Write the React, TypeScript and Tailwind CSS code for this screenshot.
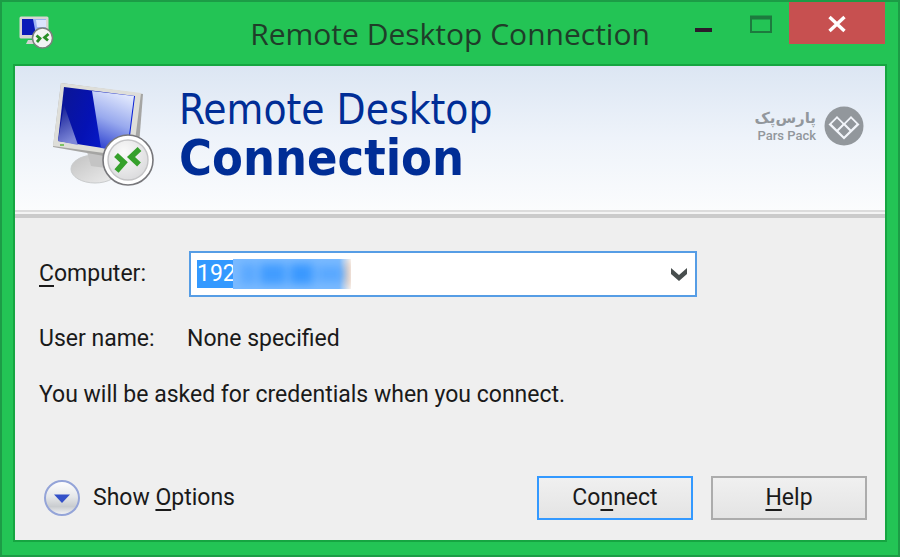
import React, { useState } from 'react';

function SessionBadge() {
  return (
    <>
      <circle cx="77" cy="78" r="25" fill="#fff" stroke="#77777b" strokeWidth="1.6" />
      <circle cx="77" cy="78" r="20" fill="url(#badgeFill)" stroke="#c4c4c6" strokeWidth="1.4" />
      <path d="M65 73 L73 80.500 L65.500 89" fill="none" stroke="#35a02b" strokeWidth="5.500" />
      <path d="M88.500 67 L80 75 L88 82.500" fill="none" stroke="#35a02b" strokeWidth="5.500" />
    </>
  );
}

function RemoteDesktopIcon() {
  return (
    <svg viewBox="0 0 104 104" className="h-[104px] w-[104px] shrink-0" aria-hidden="true">
      <defs>
        <linearGradient id="screenFill" x1="0" y1="0" x2="1" y2="0.3">
          <stop offset="0" stopColor="#0c1690" />
          <stop offset="0.5" stopColor="#0512b4" />
          <stop offset="1" stopColor="#0820d8" />
        </linearGradient>
        <linearGradient id="glareFill" x1="0.6" y1="0" x2="0.3" y2="1">
          <stop offset="0" stopColor="#e2e9fd" />
          <stop offset="0.5" stopColor="#98a9ee" />
          <stop offset="1" stopColor="#2c40cf" />
        </linearGradient>
        <linearGradient id="cornerFill" x1="0" y1="0" x2="0.3" y2="1">
          <stop offset="0" stopColor="#0a1490" />
          <stop offset="1" stopColor="#7d87d8" />
        </linearGradient>
        <linearGradient id="standFill" x1="0" y1="0" x2="1" y2="1">
          <stop offset="0" stopColor="#c2c2c2" />
          <stop offset="1" stopColor="#eeeeee" />
        </linearGradient>
        <radialGradient id="badgeFill" cx="0.4" cy="0.3" r="0.8">
          <stop offset="0" stopColor="#fafafa" />
          <stop offset="1" stopColor="#d8d8da" />
        </radialGradient>
      </defs>
      <ellipse cx="44" cy="87" rx="24" ry="14" fill="url(#standFill)" stroke="#c9cbcc" />
      <path d="M36 70 L58 74 L55 86 L40 84 Z" fill="#c4c4c4" />
      <path d="M10 1 L92 12 L87 76 L76 78 L2 65 Z" fill="#a5a5a3" />
      <path d="M10 1 L90 11 L82 75 L2 64 Z" fill="#deded9" />
      <path d="M13 5 L84 14 L77 70 L7 59 Z" fill="url(#screenFill)" />
      <path d="M13 23 L27 63 L7 59 Z" fill="url(#cornerFill)" />
      <path d="M41 9 L83 14 L76 69 L50 66 Z" fill="url(#glareFill)" />
      <path d="M9 63 h4" stroke="#7cc463" strokeWidth="2" />
      <SessionBadge />
    </svg>
  );
}

function WindowIcon() {
  return (
    <svg viewBox="0 0 35 35" className="h-[35px] w-[35px]" aria-hidden="true">
      <path d="M9 26 h12 v4 h-14 Z" fill="#d4d4d2" />
      <rect x="0.500" y="2.500" width="29" height="22" rx="1.500" fill="#d8d5d2" />
      <rect x="3" y="5" width="24" height="16" fill="#9db4f2" />
      <path d="M3 5 h11 l3 16 H3 Z" fill="#0a1ab8" />
      <path d="M17 6 h10 v7 h-9 Z" fill="#dbe4fd" />
      <circle cx="23.500" cy="24" r="10" fill="#f4f4f4" stroke="#7b817c" strokeWidth="1.500" />
      <path d="M17.500 21.500 l3.500 3 l-3 3.500" fill="none" stroke="#2a8f28" strokeWidth="2.800" />
      <path d="M29.500 20 l-4 3.500 l3.500 3" fill="none" stroke="#2a8f28" strokeWidth="2.800" />
    </svg>
  );
}

function TitleBar() {
  return (
    <div className="flex h-16 items-start">
      <div className="flex-1 pt-3 pl-1">
        <WindowIcon />
      </div>
      <h1 className="pt-3 pr-1 font-['Open_Sans'] text-[30px] leading-10 whitespace-nowrap text-[#1f3d29]">
        Remote Desktop Connection
      </h1>
      <div className="flex flex-1 justify-end">
        <button aria-label="Minimize" className="flex h-[42px] w-[57px] items-center justify-center">
          <svg viewBox="0 0 24 24" className="h-6 w-6">
            <rect x="3" y="17" width="17" height="4" fill="#2b1b2b" />
          </svg>
        </button>
        <button aria-label="Maximize" className="flex h-[42px] w-[57px] items-center justify-center">
          <svg viewBox="0 0 24 24" className="h-6 w-6">
            <path d="M2 6 h20 v15 h-20 Z" fill="none" stroke="#1d7a3e" strokeWidth="2" />
            <path d="M1 6.500 h22" stroke="#1d7a3e" strokeWidth="4" />
          </svg>
        </button>
        <button aria-label="Close" className="flex h-[42px] w-24 items-center justify-center bg-[#c75050]">
          <svg viewBox="0 0 20 20" className="h-5 w-5">
            <path d="M2.500 4 L17.500 18 M17.500 4 L2.500 18" stroke="#fff" strokeWidth="3.400" />
          </svg>
        </button>
      </div>
    </div>
  );
}

function ParsPackLogo() {
  return (
    <div className="mb-6 flex items-center gap-2 text-[#92979c]">
      <div className="flex flex-col items-end whitespace-nowrap">
        <span lang="fa" dir="rtl" className="font-['DejaVu_Sans'] text-[15px] leading-5 font-bold">
          پارس‌پک
        </span>
        <span className="font-['Roboto'] text-[13px] leading-4 font-medium">Pars Pack</span>
      </div>
      <svg viewBox="0 0 40 40" className="h-10 w-10" aria-hidden="true">
        <circle cx="20" cy="20" r="19.500" fill="#92979c" />
        <path d="M4.500 18.500 L13 10 L20 17 L27 10 L35.500 18.500 L20 33.500 Z" fill="#f2f5fa" />
        <path d="M13 12.500 L18.500 18 L13 23.500 L7.500 18 Z M27 12.500 L32.500 18 L27 23.500 L21.500 18 Z M20 19.500 L25.500 25 L20 30.500 L14.500 25 Z" fill="#92979c" />
      </svg>
    </div>
  );
}

function Banner() {
  return (
    <header className="flex h-36 items-center bg-linear-to-b from-[#dce6f3] via-[#eef3fa] to-[#fbfcfd] pr-[21px] pl-9">
      <div className="flex flex-1 items-center gap-6 pb-2">
        <RemoteDesktopIcon />
        <h2 className="font-['DejaVu_Sans_Condensed','DejaVu_Sans'] text-[42px] leading-12 whitespace-nowrap text-[#002d96]">
          <span className="block">Remote Desktop</span>
          <strong className="block text-[50px] leading-12">Connection</strong>
        </h2>
      </div>
      <ParsPackLogo />
    </header>
  );
}

function ComputerField() {
  const [computer, setComputer] = useState('192');

  return (
    <div className="flex items-center">
      <label htmlFor="computer" className="w-[150px]">
        <Key>C</Key>omputer:
      </label>
      <div className="flex h-[46px] w-[508px] items-center border-2 border-[#569de5] bg-white pl-[6px]">
        <input
          id="computer"
          value={computer}
          onChange={(e) => setComputer(e.target.value)}
          className="h-7 w-9 bg-[#3399ff] text-white outline-none"
        />
        <div className="flex h-[30px] w-[118px] items-center overflow-hidden bg-linear-to-r from-[#7abaff] from-90% to-white" aria-hidden="true">
          <div className="flex w-full items-center gap-1 pl-2 blur-xs">
            <span className="h-5 w-4 bg-[#5aa8ff]" />
            <span className="h-5 w-7 bg-[#429cff]" />
            <span className="h-5 w-6 bg-[#3a98ff]" />
            <span className="h-4 w-7 bg-[#5aa8ff]" />
            <span className="h-7 w-1 bg-[#e0a880]" />
          </div>
        </div>
        <button aria-label="Show saved computers" className="ml-auto flex h-full w-8 items-center justify-center">
          <svg viewBox="0 0 18 16" className="h-4 w-[18px]">
            <path d="M1 2 L9 9 L17 2 V8 L9 15 L1 8 Z" fill="#484e4e" />
          </svg>
        </button>
      </div>
    </div>
  );
}

// Access key letter
function Key({ children }: { children: React.ReactNode }) {
  return <span className="underline decoration-2 underline-offset-4">{children}</span>;
}

export default function App() {
  return (
    <div className="flex min-h-screen flex-col border-2 border-[#1c9c46] bg-[#23c455] px-[13px] pb-[15px] font-['Roboto'] text-[23px] leading-8 text-[#1a1a1a]">
      <TitleBar />
      <main className="flex flex-1 flex-col bg-[#efefef] outline-2 outline-[#16a541]">
        <Banner />
        <div className="h-2 border-t-2 border-b-4 border-t-[#dcdcdc] border-b-[#cbcbcb] bg-[#f4f4f4]" />
        <div className="flex flex-1 flex-col pt-[33px] pr-[18px] pb-5 pl-6">
          <ComputerField />
          <dl className="mt-[26px] flex">
            <dt className="w-[148px]">User name:</dt>
            <dd>None specified</dd>
          </dl>
          <p className="mt-6">You will be asked for credentials when you connect.</p>
          <div className="mt-auto flex items-center gap-[18px]">
            <button className="mr-auto flex items-center gap-3 pl-1">
              <svg viewBox="0 0 38 38" className="h-[38px] w-[38px]" aria-hidden="true">
                <defs>
                  <linearGradient id="knob" x1="0" y1="0" x2="0" y2="1">
                    <stop offset="0" stopColor="#ffffff" />
                    <stop offset="0.45" stopColor="#e6e8ea" />
                    <stop offset="0.75" stopColor="#c9cccf" />
                    <stop offset="1" stopColor="#f5f6f8" />
                  </linearGradient>
                </defs>
                <circle cx="19" cy="19" r="17" fill="url(#knob)" stroke="#94a4d8" strokeWidth="2" />
                <path d="M11 15.500 H27 L19 24 Z" fill="#3350c8" />
              </svg>
              <span>
                Show <Key>O</Key>ptions
              </span>
            </button>
            <button className="h-11 w-[156px] border-2 border-[#3399ff] bg-linear-to-b from-[#f0f0f0] to-[#e4e4e4]">
              Co<Key>n</Key>nect
            </button>
            <button className="h-11 w-[156px] border-2 border-[#acacac] bg-linear-to-b from-[#f0f0f0] to-[#e4e4e4]">
              <Key>H</Key>elp
            </button>
          </div>
        </div>
      </main>
    </div>
  );
}
